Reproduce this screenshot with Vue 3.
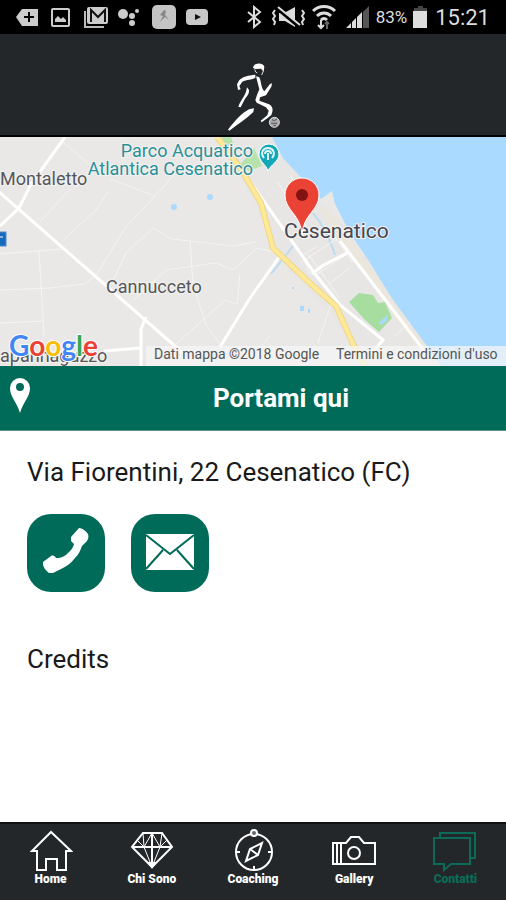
<script setup>
import { ref } from 'vue'

const active = ref('contatti')

const tabs = [
  { id: 'home',     label: 'Home' },
  { id: 'chi-sono', label: 'Chi Sono' },
  { id: 'coaching', label: 'Coaching' },
  { id: 'gallery',  label: 'Gallery' },
  { id: 'contatti', label: 'Contatti' },
]
</script>

<template>
  <div class="app">
    <!-- Device status bar -->
    <div class="status-bar">
      <div class="status-left">
        <svg viewBox="0 0 24 24" width="24" height="24" fill="#ccc">
          <path d="M0 12l6-8h16v17H6z" />
          <path d="M8 12h10M13 7v10" stroke="#000" stroke-width="2" />
        </svg>
        <svg viewBox="0 0 24 24" width="24" height="24">
          <rect x="2" y="4" width="17" height="17" rx="1" fill="none" stroke="#ccc" stroke-width="2" />
          <path d="M5 17v-3l3-3 3 3 2-2 3 3v2z" fill="#ccc" />
        </svg>
        <svg viewBox="0 0 24 24" width="24" height="24">
          <path d="M1 6v16h19" fill="none" stroke="#bbb" stroke-width="2" />
          <rect x="3" y="2" width="21" height="17" rx="2" fill="#ccc" />
          <path d="M7 17V5l7 7 7-7v12" fill="none" stroke="#111" stroke-width="2" />
        </svg>
        <svg viewBox="0 0 24 24" width="24" height="24" fill="#ccc">
          <circle cx="5" cy="9" r="5" />
          <circle cx="14" cy="11" r="3" />
          <circle cx="19" cy="6" r="2" />
          <circle cx="14" cy="18" r="3" />
        </svg>
        <svg viewBox="0 0 24 24" width="24" height="24">
          <rect width="24" height="24" rx="5" fill="#c4c4c4" />
          <path d="M12 5l2 1-1 4 4 5-4-3-5 5 3-6-3-1z" fill="#888" />
        </svg>
        <svg viewBox="0 0 24 24" width="24" height="24">
          <rect x="0" y="4" width="22" height="16" rx="4" fill="#c8c8c8" />
          <path d="M9 9v6l6-3z" fill="#111" />
        </svg>
      </div>
      <div class="status-right">
        <svg viewBox="0 0 20 24" width="20" height="24" fill="none" stroke="#ddd" stroke-width="2">
          <path d="M2 7l12 10-6 5V2l6 5L2 17" />
        </svg>
        <svg viewBox="0 0 34 24" width="34" height="24">
          <path d="M7 8h5l11-6v20l-10-6H7z" fill="#ddd" />
          <path d="M5 3l24 20" stroke="#000" stroke-width="4" />
          <path d="M6 2l22 18" stroke="#ddd" stroke-width="2" />
          <path d="M3 5l-2 3 2 3-2 3 2 3-1 3M30 5l2 3-2 3 2 3-2 3 1 3" fill="none" stroke="#ddd" stroke-width="2" />
        </svg>
        <svg viewBox="0 0 28 26" width="28" height="26" fill="none" stroke="#ddd" stroke-width="3">
          <path d="M1 7c6-6 16-6 22 0M5 12c4-4 10-4 14 0M9 16c2-2 4-2 6 0" />
          <path d="M9 16v8M6 21l3 3 3-3" stroke-width="2" />
          <path d="M15 25v-7M13 20l2-2 2 2" stroke="#666" stroke-width="2" />
        </svg>
        <svg viewBox="0 0 24 24" width="24" height="24">
          <path d="M0 23l5-5v5z M6 23v-6l4-4v10z M11 23V12l5-5v16z" fill="#ddd" />
          <path d="M17 23V7l6-6v22z" fill="#555" />
        </svg>
        <span class="battery-level">83%</span>
        <svg viewBox="0 0 16 24" width="16" height="24">
          <path d="M5 1h5v2h4v3H1V3h4z" fill="#444" />
          <rect x="0" y="6" width="14" height="17" fill="#ddd" />
        </svg>
        <time class="clock">15:21</time>
      </div>
    </div>

    <!-- Header with the runner logo -->
    <header class="header">
      <svg class="logo" viewBox="45 33 168 210" width="56" height="70" fill="#fff">
        <path d="M129 53C131 38 158 36 163 50l-2 15-8-9-18 1z" />
        <path d="M134 58l3 8 5 3M160 63l-5 12" fill="none" stroke="#ddd" stroke-width="3" />
        <path d="M136 74c-21 2-38 6-48 16l-7 13 3 17 8-2-4-10 9-13c13-7 28-5 39-12z" />
        <path d="M138 79l10 3c6 13 5 26 10 36l5 6 17-22 6-2-2 10-16 26-18 6-2 10 27 10c15 6 15 20 9 33l-12 10-17 12-3-5 20-16 4-14-8-10-28-14-4-8 6-18 6-14z" />
        <path d="M111 112l6 8c1 15-9 20-15 32l-10 20-7-2c7-20 19-32 23-45z" />
        <path d="M117 178l15-3-2 11c-20 19-45 36-72 56l-4-3c21-27 41-49 63-61z" />
        <circle cx="193" cy="217" r="15" fill="#aaa" stroke="#ddd" stroke-width="3" />
        <path d="M186 209l7 3 8-5M184 220h18M190 227l8-1" fill="none" stroke="#555" stroke-width="3" />
      </svg>
    </header>

    <main class="content">
      <svg class="map" viewBox="0 0 506 229" preserveAspectRatio="xMidYMid slice" role="img" aria-label="Mappa di Cesenatico">
        <rect width="506" height="229" fill="#e9e8e6" />
        <!-- Town area -->
        <path d="M216 0h56l11 21 38 43 30 32 42 67 50 66h-80l-30-50-45-45-40-80z" fill="#e7e6e4" />
        <!-- Sea -->
        <path d="M272 0l11 21 38 41 11-8 3 13 15 29 17 25 26 42 34 46 14 20h65V0z" fill="#aadaff" />
        <!-- Beach -->
        <path d="M318 67l12 8 20 28 43 60 40 58-8 2-52-74-40-55z" fill="#ebe7dd" />
        <!-- Parks -->
        <path d="M222 0h9l2 6-7 4zM240 28l14-17 8 18-13 5z" fill="#b5e3ab" />
        <path d="M349 165l10-9 14 2 5 8 7-1 7 16-13 14-15-13z" fill="#a8dda0" />
        <g fill="#aadaff">
          <circle cx="174" cy="70" r="3" />
          <circle cx="210" cy="60" r="3" />
          <path d="M379 185l9-7-2 7-6 3zM300 169h4v5h-4zM308 172h2v4h-2zM292 150h2v2h-2z" />
        </g>
        <path d="M271 137l22-28M313 76c8 10 15 20 22 42" fill="none" stroke="#b9dcf2" stroke-width="2" />
        <!-- Minor roads -->
        <g fill="none" stroke="#f4f4f3" stroke-width="1">
          <path d="M63 5l26 22M110 42l45 17 20-22M155 59l-30 32-28 46-12 10-35 4-50 2" />
          <path d="M40 85l30-33M62 104l34-31 12-18M0 117l62-5M39 114l5 85M0 186l44-2" />
          <path d="M113 144l13-28 27-25 19 11 61 7 23-4M190 103l3 45 13 40 15 20" />
          <path d="M134 163l32-30 50-7 17 7 24-22M240 137l-3 30-12-4-50 45M257 111l18 4" />
          <path d="M310 137l-8-18 14-9M308 117l31 43M317 137l30-20M325 150l25-19M332 96l21 30M300 126l35-23" />
          <path d="M331 167l-13 39M258 214l12-16M395 199l15-14M400 209l14 15M278 45l35 55M290 38l22 37" />
        </g>
        <!-- Main roads -->
        <g fill="none" stroke="#fff" stroke-width="3">
          <path d="M-2 54l186 163M0 89l19-18 12-24L65 0" />
          <path d="M146 180l-5 12v37M104 214l37-3M220 210l30-49 25-35 5-8" />
          <path d="M250 44l20 29 45 64 25 31 43 35-12 14M312 137l10-8 27-14M340 104l50 65 38 50" />
        </g>
        <!-- Highway -->
        <path d="M217 0l24 32 20 34 12 45 40 38 23 20 18 40 11 20" fill="none" stroke="#eed783" stroke-width="6" />
        <path d="M217 0l24 32 20 34 12 45 40 38 23 20 18 40 11 20" fill="none" stroke="#ffe898" stroke-width="4" />
        <rect x="-2" y="95" width="8" height="14" fill="#1669bd" stroke="#4e8cca" />
        <path d="M0 100h3" stroke="#fff" />

        <!-- Place names -->
        <g class="place" font-size="18">
          <text x="0" y="48">Montaletto</text>
          <text x="106" y="156">Cannucceto</text>
          <text x="0" y="225">apannaguzzo</text>
        </g>
        <g class="place poi" font-size="18" text-anchor="end">
          <text x="253" y="20">Parco Acquatico</text>
          <text x="253" y="38">Atlantica Cesenatico</text>
        </g>
        <text class="place town" x="284" y="101" font-size="21">Cesenatico</text>

        <path d="M268 34c-2-7-9-9-9-17a10 10 0 0 1 20 0c0 8-8 10-11 17z" fill="#13a8b8" stroke="#fff" />
        <path d="M264 21c-4-5-1-10 4-10s8 5 4 10M268 23v-7M265 17c0-4 6-4 6 0" fill="none" stroke="#dff5f7" stroke-width="2" />
        <path d="M302 98c-1-21-17-24-17-40a17 17 0 0 1 34 0c0 16-16 19-17 40z" fill="#ea4335" stroke="#fff" />
        <circle cx="302" cy="58" r="6" fill="#811411" />

        <!-- Attribution -->
        <rect x="146" y="209" width="360" height="20" fill="#f5f5f5" fill-opacity="0.75" />
        <g class="legal" font-size="14">
          <text x="154" y="222">Dati mappa ©2018 Google</text>
          <text x="336" y="222">Termini e condizioni d'uso</text>
        </g>
        <text class="google" x="9" y="219" font-size="28">
          <tspan fill="#4285f4">G</tspan><tspan fill="#ea4335">o</tspan><tspan fill="#fbbc05">o</tspan><tspan fill="#4285f4">g</tspan><tspan fill="#34a853">l</tspan><tspan fill="#ea4335">e</tspan>
        </text>
      </svg>

      <button class="directions" type="button">
        <svg viewBox="0 0 20 36" width="20" height="36">
          <path fill-rule="evenodd" d="M10 35C7 24 0 19 0 10a10 10 0 0 1 20 0c0 9-7 14-10 25zM10 5a4 4 0 1 0 0 8 4 4 0 0 0 0-8z" fill="#fff" />
        </svg>
        <span class="directions-label">Portami qui</span>
      </button>

      <section class="details">
        <p class="address">Via Fiorentini, 22 Cesenatico (FC)</p>
        <div class="actions">
          <button class="action" type="button" aria-label="Telefono">
            <svg class="action-icon" viewBox="0 0 48 48" width="48" height="48" fill="#fff">
              <path d="M37-1c3 0 7 3 9 6 1 3 0 5-1 7l-5 5c-2 5-3 8-7 12-4 5-8 8-12 10l-10 5H7c-3-2-5-5-6-8V33l8-6c2-1 4 0 5 2h3c4-1 6-2 9-5s5-5 6-9l-3-3v-4z" />
            </svg>
          </button>
          <button class="action" type="button" aria-label="Email">
            <svg class="action-icon" viewBox="0 0 48 48" width="48" height="48">
              <rect x="0" y="5" width="48" height="36" fill="#fff" />
              <path d="M0 6l24 19L48 6M0 40l17-19M48 40L31 21" fill="none" stroke="#006b59" stroke-width="2" />
            </svg>
          </button>
        </div>
        <a class="credits" href="#">Credits</a>
      </section>
    </main>

    <nav class="tab-bar">
      <button
        v-for="tab in tabs"
        :key="tab.id"
        class="tab"
        :class="{ active: active === tab.id }"
        type="button"
        @click="active = tab.id"
      >
        <svg viewBox="0 0 44 44" width="44" height="44" fill="none" stroke="currentColor" stroke-width="2">
          <path v-if="tab.id === 'home'" d="M22 4L3 23h5v19h9V31h11v11h9V23h5z" />
          <g v-else-if="tab.id === 'chi-sono'">
            <path d="M13 5h19l10 14-20 20L2 19zM2 19h40M22 5v34" />
            <path d="M14 19l8 20 8-20M7 12l7 7 8-14 8 14 7-7M14 19l-1-14M30 19l2-14" stroke-width="1" />
            <path d="M19 35h6l-3 4z" fill="currentColor" />
          </g>
          <g v-else-if="tab.id === 'coaching'">
            <circle cx="23" cy="24" r="18" />
            <path d="M31 15l-4 12-12 6 4-12zM19 21l8 6M5 24h4M37 24h4M23 38v4" />
            <circle cx="23" cy="5" r="3" fill="#666" />
          </g>
          <g v-else-if="tab.id === 'gallery'">
            <path d="M1 15h13l5-6h8l5 6h11v21H1zM5 15v21M9 15v21" />
            <circle cx="22" cy="25" r="6" />
          </g>
          <g v-else>
            <path d="M1 10h36v26H18l-7 6v-6H1z" />
            <path d="M7 10V5h35v25h-5" />
          </g>
        </svg>
        <span>{{ tab.label }}</span>
      </button>
    </nav>
  </div>
</template>

<style>
body {
  margin: 0;
  background: #fff;
}
</style>

<style scoped>
.app {
  display: flex;
  flex-direction: column;
  min-height: 100vh;
  font-family: Roboto, sans-serif;
  color: #1a1a1a;
}
svg { display: block; flex-shrink: 0; }
button {
  border: none;
  padding: 0;
  font-family: inherit;
  cursor: pointer;
}

/* Status bar */
.status-bar {
  display: flex;
  justify-content: space-between;
  align-items: center;
  height: 34px;
  padding: 0 16px;
  background: #000;
  color: #ddd;
}
.status-left { display: flex; gap: 10px; }
.status-right { display: flex; align-items: center; gap: 6px; }
.battery-level { font-size: 17px; }
.clock { font-size: 22px; }

/* Header */
.header {
  display: flex;
  justify-content: center;
  align-items: flex-end;
  height: 101px;
  background: #23272a;
  border-bottom: 2px solid #000;
}
.logo { margin-bottom: 4px; }

.content { flex: 1; }

/* Map */
.map {
  width: 100%;
  height: 229px;
}
.place {
  fill: #56565a;
  stroke: #f3f2f0;
  stroke-width: 2px;
  paint-order: stroke;
}
.poi { fill: #2a8f99; }
.town { fill: #45454f; }
.legal { fill: #555; }
.google {
  font-family: Lato, sans-serif;
  font-weight: 700;
  stroke: #fff;
  stroke-width: 2px;
  paint-order: stroke;
}

/* Directions */
.directions {
  display: flex;
  align-items: center;
  width: 100%;
  height: 65px;
  padding-left: 10px;
  background: #006b59;
  border-bottom: 1px solid #5e9188;
  color: #fff;
}
.directions svg { margin-bottom: 4px; }
.directions-label {
  flex: 1;
  padding-left: 26px;
  font-size: 26px;
  font-weight: 700;
}

/* Contact details */
.details { padding: 25px 27px; }
.address {
  margin: 0 0 26px;
  font-size: 26px;
  line-height: 32px;
}
.actions {
  display: flex;
  gap: 26px;
  margin-bottom: 51px;
}
.action {
  display: flex;
  align-items: center;
  justify-content: center;
  width: 78px;
  height: 78px;
  border-radius: 24px;
  background: #006b59;
}
.action-icon { overflow: visible; }
.credits {
  display: inline-block;
  font-size: 26px;
  line-height: 32px;
  color: inherit;
  text-decoration: none;
}

/* Bottom tabs */
.tab-bar {
  display: flex;
  height: 76px;
  border-top: 2px solid #111;
  background: #23272a;
}
.tab {
  display: flex;
  flex: 1;
  flex-direction: column;
  align-items: center;
  padding-top: 4px;
  background: none;
  color: #fff;
  font-size: 12px;
  font-weight: 900;
  line-height: 14px;
}
.tab.active { color: #0b6b58; }
</style>
